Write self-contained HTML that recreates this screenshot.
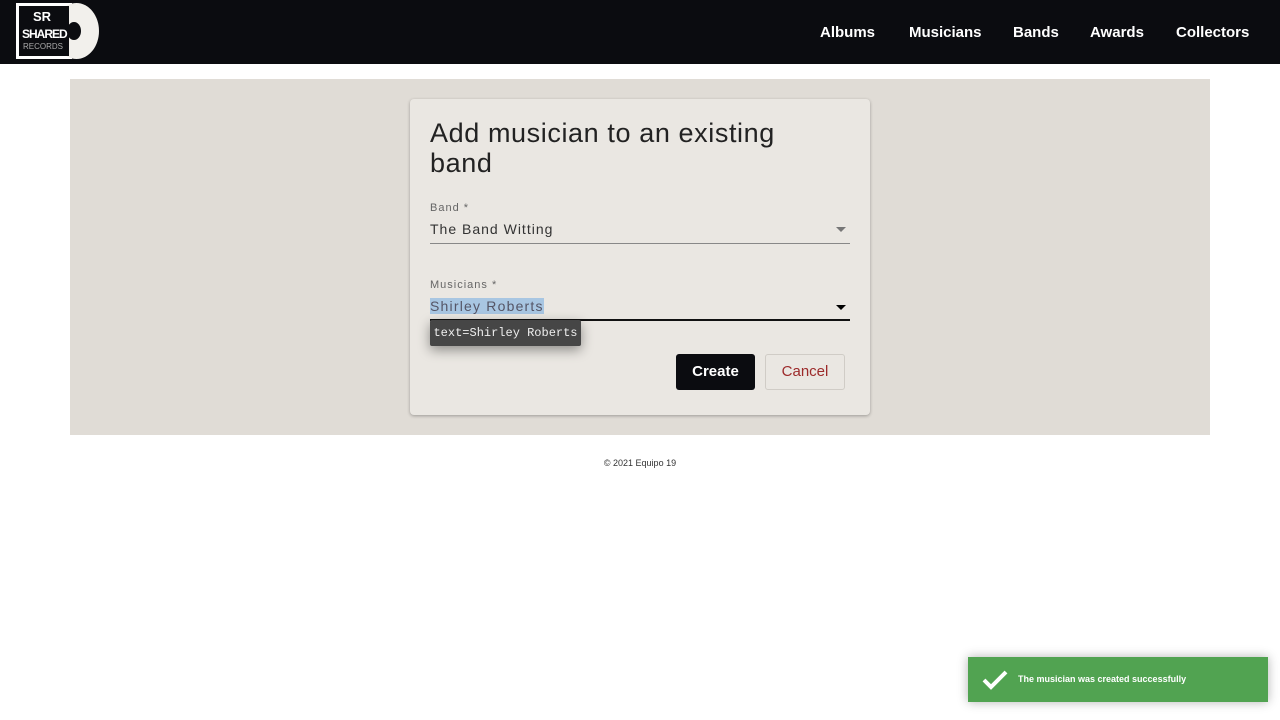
<!DOCTYPE html>
<html><head><style>
body{margin:0;width:1280px;height:720px;background:#fff;font-family:"Liberation Sans",sans-serif;position:relative;overflow:hidden}
.nav{height:64px;background:#0b0c10;position:relative}
.nav a{position:absolute;top:24px;color:#fff;font-size:15px;font-weight:bold}
.main{position:absolute;left:70px;top:79px;width:1140px;height:356px;background:#e0dcd6}
.card{position:absolute;left:410px;top:99px;width:460px;height:316px;background:#eae7e2;border-radius:4px;box-shadow:0 1px 3px rgba(0,0,0,.3)}
.abs{position:absolute}
</style></head><body>
<div class="nav">
 <div class="abs" style="left:16px;top:3px;width:56px;height:56px;background:#fff"></div>
 <div class="abs" style="left:54px;top:3px;width:45px;height:56px;border-radius:50%;background:#f2f0ec"></div>
 <div class="abs" style="left:19px;top:6px;width:50px;height:50px;background:#0b0c10"></div>
 <div class="abs" style="left:67px;top:22px;width:14px;height:18px;border-radius:50%;background:#0b0c10"></div>
 <div class="abs" style="left:22px;top:27px;color:#fff;font-size:12px;font-weight:bold;letter-spacing:-1px">SHARED</div>
 <div class="abs" style="left:33px;top:9px;color:#fff;font-size:13px;font-weight:bold">SR</div>
 <div class="abs" style="left:23px;top:42px;color:#aaa;font-size:8px">RECORDS</div>
 <a style="left:820px">Albums</a><a style="left:909px">Musicians</a><a style="left:1013px">Bands</a><a style="left:1090px">Awards</a><a style="left:1176px">Collectors</a>
</div>
<div class="main"></div>
<div class="card"></div>
<div class="abs" style="left:430px;top:118px;font-size:27px;color:#222;line-height:30px;letter-spacing:0.6px">Add musician to an existing<br>band</div>
<div class="abs" style="left:430px;top:202px;font-size:11px;color:#666;letter-spacing:1px">Band *</div>
<div class="abs" style="left:430px;top:221px;font-size:14px;color:#333;letter-spacing:1px">The Band Witting</div>
<div class="abs" style="left:836px;top:227px;border:5px solid transparent;border-top-color:#777;border-bottom:0"></div>
<div class="abs" style="left:430px;top:243px;width:420px;height:1px;background:#888"></div>
<div class="abs" style="left:430px;top:279px;font-size:11px;color:#666;letter-spacing:1px">Musicians *</div>
<div class="abs" style="left:430px;top:298px;font-size:14px;color:#556;letter-spacing:1.2px;background:#a8c6e2">Shirley Roberts</div>
<div class="abs" style="left:836px;top:305px;border:5px solid transparent;border-top-color:#000;border-bottom:0"></div>
<div class="abs" style="left:430px;top:319px;width:420px;height:2px;background:#111"></div>
<div class="abs" style="left:430px;top:320px;width:151px;height:26px;background:#464646;color:#eee;font-family:'Liberation Mono',monospace;font-size:12px;line-height:26px;text-align:center;border-radius:2px;box-shadow:0 4px 12px rgba(0,0,0,.4)">text=Shirley Roberts</div>
<div class="abs" style="left:676px;top:354px;width:79px;height:36px;background:#0b0c10;color:#fff;font-size:15px;font-weight:bold;line-height:36px;text-align:center;border-radius:3px">Create</div>
<div class="abs" style="left:765px;top:354px;width:78px;height:34px;border:1px solid #d0ccc6;color:#9c2a2a;font-size:15px;line-height:34px;text-align:center;border-radius:3px">Cancel</div>
<div class="abs" style="left:0;top:458px;width:1280px;text-align:center;font-size:9px;color:#333">© 2021 Equipo 19</div>
<div class="abs" style="left:968px;top:657px;width:300px;height:45px;background:#51a351;box-shadow:0 0 10px rgba(0,0,0,.3)">
 <svg class="abs" style="left:14px;top:12px" width="26" height="22"><path d="M2 11 L9 18 L24 3" stroke="#fff" stroke-width="4" fill="none"/></svg>
 <div class="abs" style="left:50px;top:17px;color:#fff;font-size:9px;font-weight:bold">The musician was created successfully</div>
</div>
</body></html>
